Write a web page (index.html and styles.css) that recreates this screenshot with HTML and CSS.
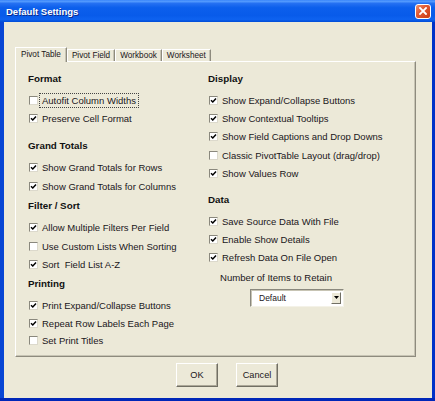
FILE: index.html
```html
<!DOCTYPE html>
<html>
<head>
<meta charset="utf-8">
<title>Default Settings</title>
<link rel="stylesheet" href="styles.css">
</head>
<body>
<div class="window">
  <div class="titlebar">
    <span class="title">Default Settings</span>
    <span class="close"><svg width="8" height="8" viewBox="0 0 8 8"><path d="M1 1 L7 7 M7 1 L1 7" stroke="#fff" stroke-width="1.8" stroke-linecap="square"/></svg></span>
  </div>
  <div class="client">
    <div class="tabs">
      <div class="tab active">Pivot Table</div>
      <div class="tab">Pivot Field</div>
      <div class="tab">Workbook</div>
      <div class="tab">Worksheet</div>
    </div>
    <div class="panel">
      <div class="col">
        <div class="group">
          <div class="heading">Format</div>
          <div class="row"><span class="cb"></span><span class="lbl focus">Autofit Column Widths</span></div>
          <div class="row"><span class="cb on"><svg viewBox="0 0 7 7"><path d="M1 3.2 L2.8 5 L6 1.5" /></svg></span><span class="lbl">Preserve Cell Format</span></div>
        </div>
        <div class="group spaced">
          <div class="heading">Grand Totals</div>
          <div class="row"><span class="cb on"><svg viewBox="0 0 7 7"><path d="M1 3.2 L2.8 5 L6 1.5" /></svg></span><span class="lbl">Show Grand Totals for Rows</span></div>
          <div class="row"><span class="cb on"><svg viewBox="0 0 7 7"><path d="M1 3.2 L2.8 5 L6 1.5" /></svg></span><span class="lbl">Show Grand Totals for Columns</span></div>
        </div>
        <div class="group">
          <div class="heading">Filter / Sort</div>
          <div class="row"><span class="cb on"><svg viewBox="0 0 7 7"><path d="M1 3.2 L2.8 5 L6 1.5" /></svg></span><span class="lbl">Allow Multiple Filters Per Field</span></div>
          <div class="row"><span class="cb"></span><span class="lbl">Use Custom Lists When Sorting</span></div>
          <div class="row short"><span class="cb on"><svg viewBox="0 0 7 7"><path d="M1 3.2 L2.8 5 L6 1.5" /></svg></span><span class="lbl">Sort&nbsp; Field List A-Z</span></div>
        </div>
        <div class="group">
          <div class="heading">Printing</div>
          <div class="row"><span class="cb on"><svg viewBox="0 0 7 7"><path d="M1 3.2 L2.8 5 L6 1.5" /></svg></span><span class="lbl">Print Expand/Collapse Buttons</span></div>
          <div class="row short"><span class="cb on"><svg viewBox="0 0 7 7"><path d="M1 3.2 L2.8 5 L6 1.5" /></svg></span><span class="lbl">Repeat Row Labels Each Page</span></div>
          <div class="row short"><span class="cb"></span><span class="lbl">Set Print Titles</span></div>
        </div>
      </div>
      <div class="col">
        <div class="group">
          <div class="heading">Display</div>
          <div class="row"><span class="cb on"><svg viewBox="0 0 7 7"><path d="M1 3.2 L2.8 5 L6 1.5" /></svg></span><span class="lbl">Show Expand/Collapse Buttons</span></div>
          <div class="row short"><span class="cb on"><svg viewBox="0 0 7 7"><path d="M1 3.2 L2.8 5 L6 1.5" /></svg></span><span class="lbl">Show Contextual Tooltips</span></div>
          <div class="row tall"><span class="cb on"><svg viewBox="0 0 7 7"><path d="M1 3.2 L2.8 5 L6 1.5" /></svg></span><span class="lbl">Show Field Captions and Drop Downs</span></div>
          <div class="row short"><span class="cb"></span><span class="lbl">Classic PivotTable Layout (drag/drop)</span></div>
          <div class="row"><span class="cb on"><svg viewBox="0 0 7 7"><path d="M1 3.2 L2.8 5 L6 1.5" /></svg></span><span class="lbl">Show Values Row</span></div>
        </div>
        <div class="group spaced">
          <div class="heading">Data</div>
          <div class="row"><span class="cb on"><svg viewBox="0 0 7 7"><path d="M1 3.2 L2.8 5 L6 1.5" /></svg></span><span class="lbl">Save Source Data With File</span></div>
          <div class="row short"><span class="cb on"><svg viewBox="0 0 7 7"><path d="M1 3.2 L2.8 5 L6 1.5" /></svg></span><span class="lbl">Enable Show Details</span></div>
          <div class="row"><span class="cb on"><svg viewBox="0 0 7 7"><path d="M1 3.2 L2.8 5 L6 1.5" /></svg></span><span class="lbl">Refresh Data On File Open</span></div>
          <div class="caption">Number of Items to Retain</div>
          <div class="combo">
            <span class="combo-text">Default</span>
            <span class="combo-btn"><svg width="5" height="3" viewBox="0 0 5 3"><path d="M0 0 H5 L2.5 3 Z" fill="#000"/></svg></span>
          </div>
        </div>
      </div>
    </div>
    <div class="buttons">
      <button class="btn">OK</button>
      <button class="btn">Cancel</button>
    </div>
  </div>
</div>
</body>
</html>
```

FILE: styles.css
```css
* { box-sizing: border-box; }
html, body { margin: 0; padding: 0; }
body {
  width: 435px;
  height: 401px;
  overflow: hidden;
  font-family: "Liberation Sans", Arial, sans-serif;
  background: #ffffff;
}
.window {
  width: 435px;
  height: 401px;
  display: flex;
  flex-direction: column;
  background: linear-gradient(to right, #0846D4 0, #0A54E6 50%, #0031C8 100%);
  border-bottom: 3px solid #0027B8;
}
.titlebar {
  height: 22px;
  flex: none;
  display: flex;
  align-items: center;
  justify-content: space-between;
  padding: 0 4px 0 6px;
  background: linear-gradient(to bottom, #2F7DF8 0, #5AA0FF 5%, #2470F2 16%, #0C5FEC 35%, #085BEA 70%, #0E62F0 88%, #004CD6 100%);
}
.title {
  color: #fff;
  font-weight: bold;
  font-size: 9.5px;
  text-shadow: 1px 1px 0 #0B2A8C;
}
.close {
  width: 16px;
  height: 15px;
  border: 1px solid #fff;
  border-radius: 3px;
  background: linear-gradient(135deg, #F0926F 0, #E25A33 40%, #C83C12 100%);
  display: flex;
  align-items: center;
  justify-content: center;
}
.client {
  flex: 1;
  margin: 0 3px 0 4px;
  background: #ECE9D8;
  padding: 25px 16px 0 11px;
  display: flex;
  flex-direction: column;
  color: #1a161a;
}
.tabs {
  display: flex;
  align-items: flex-end;
  height: 14px;
}
.tab {
  font-size: 8.2px;
  height: 12px;
  line-height: 11px;
  padding: 0 4px;
  border-top: 1px solid #fff;
  border-left: 1px solid #fff;
  border-right: 1px solid #8E8B7E;
  box-shadow: inset -1px 0 0 #C7C4B4;
  white-space: nowrap;
}
.tab.active {
  height: 15px;
  line-height: 13px;
  padding: 0 5px;
  margin-bottom: -1px;
  background: #ECE9D8;
  position: relative;
  z-index: 1;
}
.panel {
  height: 296px;
  display: grid;
  grid-template-columns: 180px 1fr;
  padding: 10px 0 0 12px;
  border-top: 1px solid #fff;
  border-left: 1px solid #fff;
  border-right: 1px solid #8E8B7E;
  border-bottom: 1px solid #8E8B7E;
  box-shadow: inset -1px -1px 0 #C7C4B4;
}
.group + .group { margin-top: 4px; }
.group.spaced { margin-top: 11px; }
.heading {
  font-weight: bold;
  font-size: 9.8px;
  height: 14px;
  line-height: 14px;
  margin-bottom: 5px;
  color: #111;
}
.row {
  height: 18.6px;
  display: flex;
  align-items: center;
  padding-left: 1px;
  font-size: 9.5px;
}
.row.short { height: 17.4px; }
.row.tall { height: 19.4px; }
.cb {
  width: 9px;
  height: 9px;
  flex: none;
  background: #fff;
  border-style: solid;
  border-width: 1px;
  border-color: #8A887D #DCD9CC #DCD9CC #8A887D;
  display: flex;
  align-items: center;
  justify-content: center;
  margin-right: 1px;
}
.cb svg {
  width: 7px;
  height: 7px;
  display: block;
}
.cb svg path {
  fill: none;
  stroke: #000;
  stroke-width: 1.5;
}
.lbl {
  line-height: 11px;
  padding: 1px 2px;
  border: 1px solid transparent;
  white-space: nowrap;
}
.lbl.focus {
  border: 1px dotted #444;
}
.caption {
  font-size: 9.6px;
  line-height: 14px;
  margin-top: 4px;
  padding-left: 12px;
}
.combo {
  margin: 4px 0 0 42px;
  width: 94px;
  height: 18px;
  background: #fff;
  border-style: solid;
  border-width: 1px;
  border-color: #8A887D #F4F2E8 #F4F2E8 #8A887D;
  box-shadow: inset 1px 1px 0 #C7C4B4;
  display: flex;
  align-items: center;
  justify-content: space-between;
  padding: 2px 2px 2px 8px;
}
.combo-text {
  font-size: 8.5px;
}
.combo-btn {
  width: 10px;
  height: 12px;
  background: #ECE9D8;
  border-style: solid;
  border-width: 1px;
  border-color: #fff #716F64 #716F64 #fff;
  display: flex;
  align-items: center;
  justify-content: center;
}
.buttons {
  display: flex;
  justify-content: center;
  gap: 18px;
  padding-left: 23px;
  margin-top: 6px;
}
.btn {
  width: 42px;
  height: 24px;
  background: #ECE9D8;
  font-family: "Liberation Sans", Arial, sans-serif;
  font-size: 9.2px;
  color: #1a161a;
  border-style: solid;
  border-width: 1px;
  border-color: #fff #716F64 #716F64 #fff;
  box-shadow: inset -1px -1px 0 #ACA899;
  padding: 0;
}
```
